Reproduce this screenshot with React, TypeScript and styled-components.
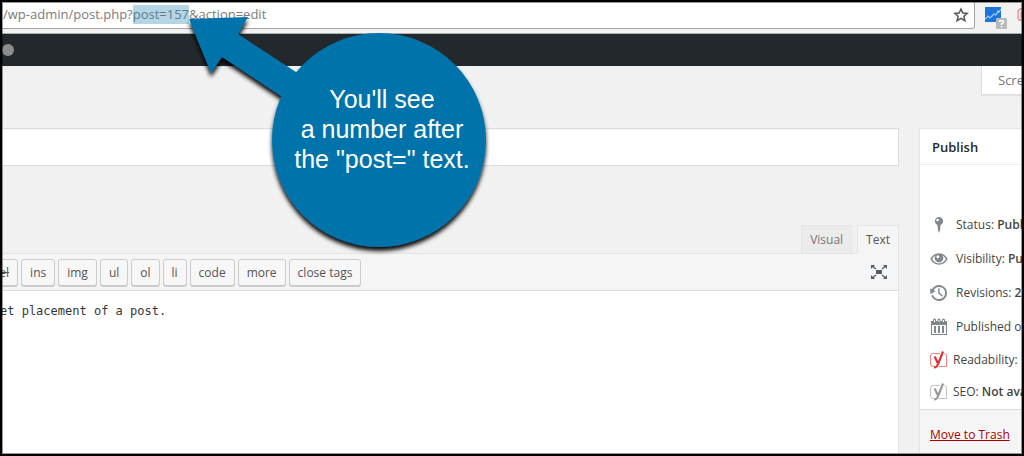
import React, { useEffect, useRef } from "react";
import styled, { createGlobalStyle } from "styled-components";

const Global = createGlobalStyle`
  * { box-sizing: border-box; }
  body { margin: 0; background: #f1f1f1; }
  body, button, input, textarea { font-family: "Open Sans", "Noto Sans", sans-serif; }
  button, input, textarea { margin: 0; }
  svg { flex-shrink: 0; }
`;

const Page = styled.div`
  position: relative;
  display: flex;
  flex-direction: column;
  min-height: 100vh;
  overflow: hidden;
  color: #444;
  font-size: 12px;
  line-height: 18px;
  &::after {
    content: "";
    position: absolute;
    inset: 0;
    border: 2px solid #000;
    box-shadow: inset 0 0 0 1px rgba(0, 0, 0, 0.4);
    pointer-events: none;
    z-index: 3;
  }
`;

const BrowserBar = styled.header`
  display: flex;
  align-items: flex-start;
  height: 34px;
  background: #f2f2f2;
  border-bottom: 1px solid #aab1b1;
`;

const AddressBox = styled.div`
  display: flex;
  flex: 1;
  align-items: center;
  height: 29px;
  padding-right: 5px;
  background: #fff;
  border: 1px solid #a5a5a5;
  border-left: 0;
  border-radius: 0 3px 3px 0;
`;

const AddressInput = styled.input`
  flex: 1;
  height: 19px;
  padding: 0 0 0 3px;
  border: 0;
  outline: 0;
  background: transparent;
  color: #7b7b7b;
  font-size: 13px;
  line-height: 19px;
  &::selection { background: #b3d5e6; color: #5f7e8d; }
`;

const IconButton = styled.button`
  display: flex;
  flex-shrink: 0;
  padding: 0;
  border: 0;
  background: none;
  color: inherit;
`;

const Extensions = styled.div`
  display: flex;
  gap: 8px;
  width: 39px;
  margin: 6px 0 0 10px;
  overflow: hidden;
`;

const AdminBar = styled.div`
  display: flex;
  align-items: center;
  height: 32px;
  padding-left: 2px;
  background: #23282d;
`;

const Dot = styled.span`
  width: 12px;
  height: 12px;
  border-radius: 50%;
  background: #8c8c8c;
`;

const ScreenMeta = styled.div`
  display: flex;
  justify-content: flex-end;
  height: 62px;
`;

const ScreenOptions = styled.button`
  width: 43px;
  height: 29px;
  padding: 0 0 0 16px;
  overflow: hidden;
  border: 1px solid #ddd;
  border-width: 0 0 1px 1px;
  background: #fff;
  box-shadow: 0 1px 1px rgba(0, 0, 0, 0.05);
  color: #72777c;
  font-size: 13px;
  text-align: left;
  white-space: nowrap;
`;

const Columns = styled.main`
  display: flex;
  flex: 1;
  gap: 20px;
`;

const EditColumn = styled.section`
  display: flex;
  flex: 1;
  flex-direction: column;
  min-width: 0;
`;

const TitleInput = styled.input`
  width: 100%;
  height: 38px;
  padding: 3px 8px;
  border: 1px solid #ddd;
  border-left: 0;
  outline: 0;
  background: #fff;
  box-shadow: inset 0 1px 2px rgba(0, 0, 0, 0.05);
  font-size: 22px;
`;

const Tabs = styled.div`
  display: flex;
  justify-content: flex-end;
  gap: 5px;
  margin-top: 59px;
`;

const Tab = styled.button<{ $active?: boolean }>`
  position: relative;
  z-index: 1;
  height: 29px;
  margin-bottom: -1px;
  padding: 0 8px;
  border: 1px solid #e5e5e5;
  border-bottom-color: ${(p) => (p.$active ? "#f5f5f5" : "#e5e5e5")};
  background: ${(p) => (p.$active ? "#f5f5f5" : "#ebebeb")};
  color: ${(p) => (p.$active ? "#555" : "#777")};
  font-size: 12px;
`;

const Editor = styled.div`
  display: flex;
  flex: 1;
  flex-direction: column;
  border-right: 1px solid #e5e5e5;
`;

const TagBar = styled.div`
  display: flex;
  align-items: center;
  justify-content: space-between;
  height: 38px;
  padding-right: 10px;
  border-top: 1px solid #e5e5e5;
  border-bottom: 1px solid #ddd;
  background: #f5f5f5;
  color: #555d66;
`;

const TagButtons = styled.div`
  display: flex;
  gap: 3px;
  margin-left: -17px;
`;

const TagButton = styled.button<{ $struck?: boolean }>`
  height: 27px;
  padding: 0 8px;
  border: 1px solid #ccc;
  border-radius: 3px;
  background: #f7f7f7;
  box-shadow: 0 1px 0 #ccc;
  color: #555;
  font-size: 12px;
  text-decoration: ${(p) => (p.$struck ? "line-through" : "none")};
`;

const Content = styled.textarea`
  display: block;
  flex: 1;
  width: 100%;
  padding: 10px 0;
  border: 0;
  outline: 0;
  resize: none;
  background: #fff;
  color: #32373c;
  font-family: "DejaVu Sans Mono", monospace;
  font-size: 12px;
  line-height: 20px;
`;

const PublishBox = styled.aside`
  display: flex;
  flex-direction: column;
  width: 105px;
  overflow: hidden;
  border: 1px solid #e5e5e5;
  border-width: 1px 0 0 1px;
  background: #fff;
  white-space: nowrap;
`;

const BoxTitle = styled.h2`
  height: 36px;
  margin: 0;
  padding: 0 12px;
  border-bottom: 1px solid #eee;
  color: #23282d;
  font-size: 13px;
  font-weight: 600;
  line-height: 36px;
`;

const StatusList = styled.ul`
  flex: 1;
  margin: 0;
  padding: 43px 0 0 9px;
  list-style: none;
`;

const StatusItem = styled.li<{ $tight?: boolean }>`
  display: flex;
  align-items: center;
  gap: ${(p) => (p.$tight ? "5px" : "7px")};
  height: ${(p) => (p.$tight ? "32px" : "34px")};
  b { font-weight: 600; }
`;

const BoxFooter = styled.div`
  height: 47px;
  padding: 16px 10px;
  border-top: 1px solid #ddd;
  background: #f5f5f5;
`;

const TrashLink = styled.a`
  color: #a00;
  font-size: 12px;
`;

const Callout = styled.div`
  position: absolute;
  top: 0;
  left: 170px;
  width: 340px;
  z-index: 2;
  pointer-events: none;
  svg { display: block; }
`;

const CalloutText = styled.p`
  position: absolute;
  top: 84px;
  left: 103px;
  width: 218px;
  margin: 0;
  color: #fff;
  font-family: "Liberation Sans", sans-serif;
  font-size: 25px;
  line-height: 30px;
  text-align: center;
`;

const Glyph = ({ d }: { d: string }) => (
  <svg width="20" height="20" viewBox="0 0 20 20" fill="#82878c" fillRule="evenodd" aria-hidden="true">
    <path d={d} />
  </svg>
);

const PIN = "M10 2a4.200 4.200 0 0 0-1.600 8L9 15l1 3 1-3 .6-5A4.200 4.200 0 0 0 10 2zM8.600 3.700a1.400 1.400 0 1 1 0 2.800 1.400 1.400 0 0 1 0-2.800z";
const EYE = "M18.700 10C16.700 6.300 13.700 4.300 10 4.300S3.300 6.300 1.300 10c2 3.700 5 5.700 8.700 5.700s6.700-2 8.700-5.700zM10 14.400c-3 0-5.300-1.700-6.900-4.400.9-1.600 2.100-2.800 3.600-3.500A4.200 4.200 0 1 0 13.300 6.500c1.500.7 2.700 1.900 3.600 3.500-1.600 2.700-3.900 4.400-6.900 4.400zM8.900 6.300a1.500 1.500 0 1 1 0 3 1.500 1.500 0 0 1 0-3z";
const BACKUP = "M13.650 2.880c3.930 2.010 5.480 6.840 3.470 10.770s-6.830 5.480-10.770 3.470c-1.870-.96-3.200-2.560-3.860-4.400l1.640-1.030c.45 1.570 1.520 2.950 3.080 3.760 3.010 1.540 6.690.35 8.230-2.660 1.550-3.010.36-6.690-2.650-8.240C9.780 3.010 6.100 4.200 4.560 7.210l1.880.97-4.950 3.080-.39-5.820 1.780.91C4.900 2.400 9.750.89 13.650 2.880zM9.200 5.300h1.400v4.300l3.400 3.100-1 1-3.800-3.500z";
const CALENDAR = "M2 4h2V3a1.500 1.500 0 0 1 3 0v1h1.500V3a1.500 1.500 0 0 1 3 0v1H13V3a1.500 1.500 0 0 1 3 0v1h2v14H2zM3 8v9h14V8zM5 9h2v7H5zM9 9h2v7H9zM13 9h2v7h-2zM5 3v2h1V3zM14 3v2h1V3zM9.500 3v2h1V3z";

const Yoast = ({ color }: { color: string }) => (
  <svg width="19" height="20" viewBox="0 0 19 20" fill="none" stroke={color} aria-hidden="true">
    <path d="M11 3.500H4A2.500 2.500 0 0 0 1.500 6v8A2.500 2.500 0 0 0 4 16.500h1M10 16.500h7.500V6A2.500 2.500 0 0 0 15.500 3.500" strokeOpacity=".6" />
    <path d="M5.700 6.500 8.700 13M14 1.500 9.500 13Q8 17.500 5 17.500" strokeWidth="2.200" />
  </svg>
);

const URL_TEXT = "/wp-admin/post.php?post=157&action=edit";
const TAGS = ["del", "ins", "img", "ul", "ol", "li", "code", "more", "close tags"];

export default function App() {
  const address = useRef<HTMLInputElement>(null);

  useEffect(() => {
    const start = URL_TEXT.indexOf("post=157");
    address.current?.focus();
    address.current?.setSelectionRange(start, start + 8);
  }, []);

  return (
    <Page>
      <Global />
      <BrowserBar>
        <AddressBox>
          <AddressInput ref={address} aria-label="Address" defaultValue={URL_TEXT} spellCheck={false} />
          <IconButton aria-label="Bookmark this page">
            <svg width="16" height="16" viewBox="0 0 16 16" fill="none" stroke="#555" strokeWidth="1.500">
              <path d="M8 2l1.800 4 4.400.4-3.300 2.900 1 4.300L8 11.300l-3.900 2.300 1-4.300L1.800 6.400 6.200 6z" />
            </svg>
          </IconButton>
        </AddressBox>
        <Extensions>
          <IconButton aria-label="Traffic statistics">
            <svg width="23" height="23" viewBox="0 0 23 23">
              <path fill="#1d75dc" d="M0 1h16v15H0z" />
              <path fill="none" stroke="#9fd0fb" strokeWidth="1.200" d="M0 13l3-3 2 2 4-4 2 1 2-4 1 1 2-3" />
              <rect x="11" y="12" width="11" height="11" rx="1" fill="#b9b9b9" />
              <path fill="none" stroke="#fff" strokeWidth="1.500" d="M14.500 16q0-1.500 2-1.500t2 1.500q0 1-2 2v1M16.500 20v1.500" />
            </svg>
          </IconButton>
          <IconButton aria-label="Extension">
            <svg width="14" height="16" viewBox="0 0 14 16" fill="none" stroke="#e58b8b" strokeWidth="1.300">
              <path d="M10 3H4L2 5v7l1 2h8M5 6v5h5M5 6h4" />
            </svg>
          </IconButton>
        </Extensions>
      </BrowserBar>
      <AdminBar><Dot /></AdminBar>
      <ScreenMeta><ScreenOptions>Screen Options</ScreenOptions></ScreenMeta>
      <Columns>
        <EditColumn>
          <TitleInput aria-label="Post title" />
          <Tabs>
            <Tab>Visual</Tab>
            <Tab $active>Text</Tab>
          </Tabs>
          <Editor>
            <TagBar>
              <TagButtons>
                {TAGS.map((tag) => <TagButton key={tag} $struck={tag === "del"}>{tag}</TagButton>)}
              </TagButtons>
              <IconButton aria-label="Distraction-free writing mode">
                <svg width="18" height="16" viewBox="0 0 18 16" fill="#555d66">
                  <path d="M6 6h6v4H6zM1 1h4L3.800 2.200 6.500 4.800 5.700 5.600 2.700 3.300 1 5zM17 1h-4l1.200 1.200L11.500 4.800l.8.8 3-2.300L17 5zM1 15h4l-1.200-1.200 2.700-2.600-.8-.8-3 2.300L1 11zM17 15h-4l1.200-1.200-2.700-2.600.8-.8 3 2.300L17 11z" />
                </svg>
              </IconButton>
            </TagBar>
            <Content aria-label="Post content" defaultValue="et placement of a post." spellCheck={false} />
          </Editor>
        </EditColumn>
        <PublishBox>
          <BoxTitle>Publish</BoxTitle>
          <StatusList>
            <StatusItem><Glyph d={PIN} /><span>Status: <b>Published</b></span></StatusItem>
            <StatusItem><Glyph d={EYE} /><span>Visibility: <b>Public</b></span></StatusItem>
            <StatusItem><Glyph d={BACKUP} /><span>Revisions: <b>2</b></span></StatusItem>
            <StatusItem><Glyph d={CALENDAR} /><span>Published on:</span></StatusItem>
            <StatusItem $tight><Yoast color="#dc3232" /><span>Readability:</span></StatusItem>
            <StatusItem $tight><Yoast color="#999" /><span>SEO: <b>Not available</b></span></StatusItem>
          </StatusList>
          <BoxFooter><TrashLink href="#trash">Move to Trash</TrashLink></BoxFooter>
        </PublishBox>
      </Columns>
      <Callout>
        <svg width="340" height="270" viewBox="0 0 340 270" aria-hidden="true">
          <defs>
            <filter id="shade" x="-10%" y="-10%" width="120%" height="120%">
              <feDropShadow dx="0" dy="4" stdDeviation="2" floodColor="#000" floodOpacity="0.95" />
            </filter>
          </defs>
          <g fill="#0073aa" filter="url(#shade)">
            <path d="M19 19 78 17 68 34 132 76 114 98 52 57 41 73z" />
            <circle cx="209" cy="140" r="107" />
          </g>
        </svg>
        <CalloutText>You'll see<br />a number after<br />the "post=" text.</CalloutText>
      </Callout>
    </Page>
  );
}
